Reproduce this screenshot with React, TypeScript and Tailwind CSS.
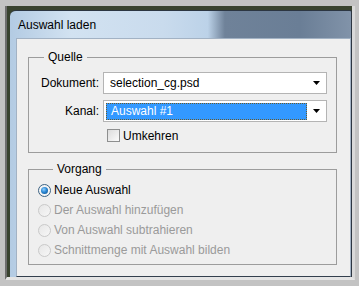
import React from "react";

function Arrow() {
  return (
    <svg width="7" height="4" viewBox="0 0 7 4" className="block">
      <path d="M0 0h7L3.5 4z" fill="#000" />
    </svg>
  );
}

function Radio({ checked, disabled }: { checked?: boolean; disabled?: boolean }) {
  if (checked) {
    return (
      <span className="w-[13px] h-[13px] rounded-full border border-[#3d6383] bg-[#f4f4f4] flex items-center justify-center shrink-0">
        <span className="w-[7px] h-[7px] rounded-full bg-[radial-gradient(circle_at_40%_35%,#8fd0ff_0%,#2a86d3_45%,#0b4a83_100%)]" />
      </span>
    );
  }
  return (
    <span
      className={
        "w-[13px] h-[13px] rounded-full border shrink-0 " +
        (disabled
          ? "border-[#c9c9c9] bg-[linear-gradient(135deg,#e6e6e6,#f7f7f7)]"
          : "border-[#8f8f8f] bg-white")
      }
    />
  );
}

export default function App() {
  const font = "font-['Liberation_Sans',Arial,sans-serif]";
  return (
    <div
      className={
        "w-[359px] h-[286px] bg-[#c3c3c3] pt-[6px] pl-[5px] pr-[4px] pb-[6px] flex text-[12px] leading-[14px] text-black " +
        font
      }
    >
      <div className="flex-1 flex bg-[#39432f] border-l-2 border-l-[#6e6e6e] border-r-[3px] border-r-[#d9d9d9] border-b-[3px] border-b-[#e4e4e4] pt-[4px] pl-[3px]">
        <div className="flex-1 flex flex-col rounded-tl-[6px] rounded-tr-[2px] border-t border-t-[#2c3642] border-r border-r-[#2c3642] bg-[linear-gradient(to_right,#b3cbe3_0%,#d2e2f1_18%,#c9dbed_45%,#bcd2e8_58%,#6f8299_63%,#6a7e96_85%,#8193a9_100%)]">
          <div className="h-[27px] flex items-center pl-[8px]">Auswahl laden</div>
          <div className="flex-1 flex pl-[6px]">
            <div className="flex-1 bg-[#efefef] border border-[#a2b2c4] border-b-[#333f4d] pt-[11px] pl-[11px] pr-[13px]">
              <fieldset className="border border-[#9c9c9c] pl-0 pr-[8px] pt-0 pb-[10px]">
                <legend className="ml-[15px] px-[4px] leading-[14px]">Quelle</legend>
                <div className="flex items-center mt-[8px] h-[22px]">
                  <span className="w-[70px] text-right">Dokument:</span>
                  <div className="ml-[4px] w-[224px] h-[22px] bg-white border border-[#b4b4b4] flex items-center">
                    <span className="flex-1 pl-[6px]">selection_cg.psd</span>
                    <span className="w-[19px] flex justify-center"><Arrow /></span>
                  </div>
                </div>
                <div className="flex items-center mt-[6px] h-[22px]">
                  <span className="w-[70px] text-right">Kanal:</span>
                  <div className="ml-[4px] w-[224px] h-[22px] bg-white border border-[#b4b4b4] flex items-center pl-[2px]">
                    <div className="w-[201px] h-[17px] bg-[#3399ff] border border-dotted border-[#6b5a2a] flex items-center pl-[4px] text-white">
                      Auswahl #1
                    </div>
                    <span className="flex-1 flex justify-center"><Arrow /></span>
                  </div>
                </div>
                <div className="flex items-center mt-[7px] h-[13px] pl-[78px]">
                  <span className="w-[13px] h-[13px] border border-[#8e8f8f] bg-[linear-gradient(135deg,#dcdcdc,#fbfbfb)] shrink-0" />
                  <span className="ml-[3px]">Umkehren</span>
                </div>
              </fieldset>
              <fieldset className="mt-[9px] border border-[#9c9c9c] pl-[9px] pt-[4px] pb-[4px]">
                <legend className="ml-[15px] px-[4px] leading-[14px]">Vorgang</legend>
                <div className="h-[20px] flex items-center">
                  <Radio checked />
                  <span className="ml-[3px]">Neue Auswahl</span>
                </div>
                <div className="h-[20px] flex items-center text-[#9a9a9a]">
                  <Radio disabled />
                  <span className="ml-[3px]">Der Auswahl hinzufügen</span>
                </div>
                <div className="h-[20px] flex items-center text-[#9a9a9a]">
                  <Radio disabled />
                  <span className="ml-[3px]">Von Auswahl subtrahieren</span>
                </div>
                <div className="h-[20px] flex items-center text-[#9a9a9a]">
                  <Radio disabled />
                  <span className="ml-[3px]">Schnittmenge mit Auswahl bilden</span>
                </div>
              </fieldset>
            </div>
          </div>
        </div>
      </div>
    </div>
  );
}
